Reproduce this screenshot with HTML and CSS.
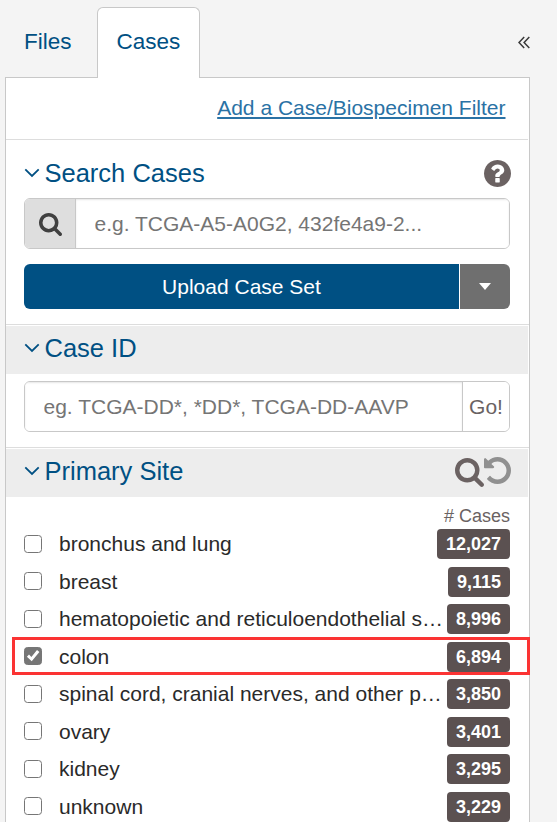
FILE: index.html
```html
<!DOCTYPE html>
<html lang="en">
  <head>
    <meta charset="UTF-8" />
    <meta name="viewport" content="width=device-width, initial-scale=1" />
    <title>Cases</title>
    <link rel="stylesheet" href="styles.css">
  </head>
  <body>
    <aside class="sidebar">
      <nav class="tabs">
        <a class="tab">Files</a>
        <a class="tab active">Cases</a>
        <button class="collapse" aria-label="Collapse">
          <svg width="12" height="13" viewBox="0 0 12 13"><path d="M6.2 1 1 6.5l5.200 5.500M11.300 1 6.100 6.500l5.200 5.500" /></svg>
        </button>
      </nav>

      <div class="panel">
        <div class="add-filter"><a>Add a Case/Biospecimen Filter</a></div>

        <section>
          <header class="facet-header plain">
            <svg class="angle" width="16" height="10" viewBox="0 0 16 10"><path d="M1.300 1.300 8 8l6.700-6.700" /></svg>
            <h2>Search Cases</h2>
            <svg class="icon help" viewBox="128 128 1536 1536"><path d="M1024 1376v-192q0-14-9-23t-23-9h-192q-14 0-23 9t-9 23v192q0 14 9 23t23 9h192q14 0 23-9t9-23zm256-672q0-88-55.5-163t-138.500-116-170-41q-243 0-371 213-15 24 8 42l132 100q7 6 19 6 16 0 25-12 53-68 86-92 34-24 86-24 48 0 85.500 26t37.500 59q0 38-20 61t-68 45q-63 28-115.500 86.500t-52.500 125.500v36q0 14 9 23t23 9h192q14 0 23-9t9-23q0-19 21.500-49.500t54.500-49.500q32-18 49-28.500t46-35 44.500-48 28-60.500 12.500-81zm384 192q0 209-103 385.500t-279.500 279.500-385.500 103-385.500-103-279.500-279.500-103-385.500 103-385.500 279.500-279.500 385.500-103 385.500 103 279.500 279.500 103 385.500z" /></svg>
          </header>
          <div class="input-group">
            <span class="addon">
              <svg class="icon" viewBox="0 128 1664 1664"><path d="M1152 832q0-185-131.500-316.500t-316.500-131.500-316.500 131.500-131.500 316.500 131.500 316.500 316.500 131.500 316.500-131.500 131.500-316.500zm512 832q0 52-38 90t-90 38q-54 0-90-38l-343-342q-179 124-399 124-143 0-273.500-55.500t-225-150-150-225-55.500-273.500 55.500-273.500 150-225 225-150 273.500-55.500 273.500 55.500 225 150 150 225 55.500 273.500q0 220-124 399l343 343q37 37 37 90z" /></svg>
            </span>
            <input type="text" placeholder="e.g. TCGA-A5-A0G2, 432fe4a9-2..." />
          </div>
          <div class="upload">
            <button class="upload-btn">Upload Case Set</button>
            <button class="upload-toggle" aria-label="More"><span class="caret"></span></button>
          </div>
        </section>

        <section>
          <header class="facet-header">
            <svg class="angle" width="16" height="10" viewBox="0 0 16 10"><path d="M1.300 1.300 8 8l6.700-6.700" /></svg>
            <h2>Case ID</h2>
          </header>
          <div class="input-group case-id">
            <input type="text" placeholder="eg. TCGA-DD*, *DD*, TCGA-DD-AAVP" />
            <button class="go">Go!</button>
          </div>
        </section>

        <section>
          <header class="facet-header">
            <svg class="angle" width="16" height="10" viewBox="0 0 16 10"><path d="M1.300 1.300 8 8l6.700-6.700" /></svg>
            <h2>Primary Site</h2>
            <svg class="icon find" viewBox="0 128 1664 1664"><path d="M1152 832q0-185-131.500-316.500t-316.500-131.500-316.500 131.500-131.500 316.500 131.500 316.500 316.500 131.500 316.500-131.500 131.500-316.500zm512 832q0 52-38 90t-90 38q-54 0-90-38l-343-342q-179 124-399 124-143 0-273.500-55.500t-225-150-150-225-55.500-273.500 55.500-273.500 150-225 225-150 273.500-55.500 273.500 55.500 225 150 150 225 55.500 273.500q0 220-124 399l343 343q37 37 37 90z" /></svg>
            <svg class="icon undo" viewBox="128 128 1536 1536"><path d="M1664 896q0 156-61 298t-164 245-245 164-298 61q-172 0-327-72.500t-264-204.500q-7-10-6.500-22.500t8.500-20.500l137-138q10-9 25-9 16 2 23 12 73 95 179 147t225 52q104 0 198.500-40.500t163.500-109.500 109.500-163.500 40.500-198.500-40.500-198.500-109.500-163.500-163.500-109.500-198.500-40.500q-98 0-188 35.500t-160 101.500l137 138q31 30 14 69-17 40-59 40h-448q-26 0-45-19t-19-45v-448q0-42 40-59 39-17 69 14l130 129q107-101 244.500-156.500t284.500-55.500q156 0 298 61t245 164 164 245 61 298z" /></svg>
          </header>
          <div class="count-label"># Cases</div>
          <ul class="terms">
            <li><label><input type="checkbox" /><span class="name">bronchus and lung</span></label><span class="badge">12,027</span></li>
            <li><label><input type="checkbox" /><span class="name">breast</span></label><span class="badge">9,115</span></li>
            <li><label><input type="checkbox" /><span class="name">hematopoietic and reticuloendothelial s…</span></label><span class="badge">8,996</span></li>
            <li class="highlight"><label><input type="checkbox" checked /><span class="name">colon</span></label><span class="badge">6,894</span></li>
            <li><label><input type="checkbox" /><span class="name">spinal cord, cranial nerves, and other p…</span></label><span class="badge">3,850</span></li>
            <li><label><input type="checkbox" /><span class="name">ovary</span></label><span class="badge">3,401</span></li>
            <li><label><input type="checkbox" /><span class="name">kidney</span></label><span class="badge">3,295</span></li>
            <li><label><input type="checkbox" /><span class="name">unknown</span></label><span class="badge">3,229</span></li>
          </ul>
        </section>
      </div>
    </aside>
  </body>
</html>
```
FILE: styles.css
```css
* {
  margin: 0;
  padding: 0;
  box-sizing: border-box;
}

body {
  font-family: "Liberation Sans", Arial, sans-serif;
  font-size: 21px;
  background: #f4f4f4;
  color: #2a2a2a;
  height: 822px;
  overflow: hidden;
}

button,
input {
  font: inherit;
}

.sidebar {
  width: 525px;
  margin-left: 5px;
}

/* Tabs */
.tabs {
  display: flex;
  height: 78px;
  padding-top: 7px;
}

.tab {
  height: 71px;
  padding: 0 18.5px;
  border: 1px solid transparent;
  font-size: 22.5px;
  line-height: 68px;
  color: #005083;
}

.tab:first-child {
  width: 92px;
  padding: 0 18px;
}

.tab.active {
  position: relative;
  z-index: 1;
  width: 103px;
  background: #fff;
  border-color: #c8c8c8;
  border-bottom: none;
  border-radius: 6px 6px 0 0;
}

.collapse {
  margin-left: auto;
  height: 71px;
  background: none;
  border: none;
}

.collapse svg {
  display: block;
  fill: none;
  stroke: #3a3a3a;
  stroke-width: 1.5;
}

/* Panel */
.panel {
  margin-top: -1px;
  height: 760px;
  background: #fff;
  border: 1px solid #c8c8c8;
}

.add-filter {
  height: 62px;
  margin-right: 1px;
  padding-right: 22.5px;
  border-bottom: 1px solid #ddd;
  text-align: right;
  line-height: 60px;
}

.add-filter a {
  color: #2a72a5;
  text-decoration: underline;
  text-decoration-thickness: 2px;
  text-underline-offset: 2px;
}

.facet-header {
  display: flex;
  align-items: center;
  height: 48px;
  margin: 1px 1px 7px 0;
  padding: 0 17.5px 2px 18px;
  background: #ededed;
  color: #005083;
}

.facet-header.plain {
  height: 50px;
  margin: 8px 1px 0 0;
  padding-top: 4px;
  background: none;
}

.facet-header h2 {
  flex: 1;
  margin-left: 4.5px;
  font-size: 25.5px;
  font-weight: normal;
  line-height: 30px;
  padding-bottom: 3px;
}

.angle {
  fill: none;
  stroke: #005083;
  stroke-width: 1.8;
  margin-bottom: 3px;
}

.icon {
  display: block;
  fill: #6b6262;
}

.help,
.undo {
  width: 27px;
  height: 27px;
  margin-bottom: 2px;
}

.find {
  width: 29px;
  height: 29px;
}

.undo {
  fill: #909090;
  margin-bottom: 3px;
}

/* Inputs */
.input-group {
  display: flex;
  height: 51px;
  margin: 0 19px 0 18px;
  border: 1px solid #c8c8c8;
  border-radius: 6px;
  overflow: hidden;
}

.addon {
  display: flex;
  align-items: center;
  justify-content: center;
  width: 51px;
  background: #dedede;
  border-right: 1px solid #c8c8c8;
}

.addon .icon {
  width: 23px;
  height: 23px;
  margin-top: 2px;
  fill: #404040;
}

.input-group input {
  flex: 1;
  min-width: 0;
  padding: 0 18.5px;
  border: none;
  background: #fff;
  box-shadow: inset 0 1px 2px rgba(0, 0, 0, 0.1);
}

.input-group input::placeholder {
  color: #757575;
}

.go {
  width: 47px;
  background: #fff;
  border: none;
  border-left: 1px solid #c8c8c8;
  color: #6a6262;
}

.upload {
  display: flex;
  gap: 1px;
  height: 45px;
  margin: 15px 19px 15px 18px;
}

.upload-btn {
  flex: 1;
  background: #005083;
  border: none;
  border-radius: 6px 0 0 6px;
  color: #fff;
}

.upload-toggle {
  width: 50px;
  background: #6f6f6f;
  border: none;
  border-radius: 0 6px 6px 0;
}

.caret {
  display: block;
  width: 0;
  margin: 0 auto;
  border-top: 7px solid #fff;
  border-left: 6.5px solid transparent;
  border-right: 6.5px solid transparent;
}

section + section {
  border-top: 1px solid #ddd;
}

.case-id {
  margin-bottom: 15px;
}

/* Term list */
.count-label {
  height: 28.25px;
  margin-top: -7px;
  padding-right: 19px;
  text-align: right;
  font-size: 18px;
  line-height: 38px;
  color: #6a6262;
}

.terms {
  list-style: none;
}

.terms li {
  position: relative;
  display: flex;
  align-items: center;
  height: 37.5px;
  padding: 0 19px 0 18px;
}

.terms label {
  display: flex;
  align-items: center;
  flex: 1;
}

.terms input {
  appearance: none;
  flex: none;
  width: 18px;
  height: 18px;
  margin: 0 17px 0.6px 0;
  background: #fff;
  border: 1.5px solid #767676;
  border-radius: 3.5px;
}

.terms input:checked {
  background: #767676;
}

.terms input:checked::before {
  content: "";
  display: block;
  width: 16px;
  height: 16px;
  background: #fff;
  clip-path: polygon(12% 53%, 25% 40%, 40% 55%, 75% 12%, 90% 24%, 42% 82%);
}

.name {
  white-space: nowrap;
  line-height: 28px;
}

.badge {
  height: 30px;
  padding: 0 9px;
  border-radius: 4px;
  background: #5b5151;
  color: #fff;
  font-size: 18px;
  font-weight: bold;
  line-height: 30px;
}

/* red frame around the selected term */
.highlight::after {
  content: "";
  box-sizing: border-box;
  position: absolute;
  left: 6px;
  right: -1px;
  top: -1px;
  height: 38px;
  border: 3px solid #fb3333;
}
```
